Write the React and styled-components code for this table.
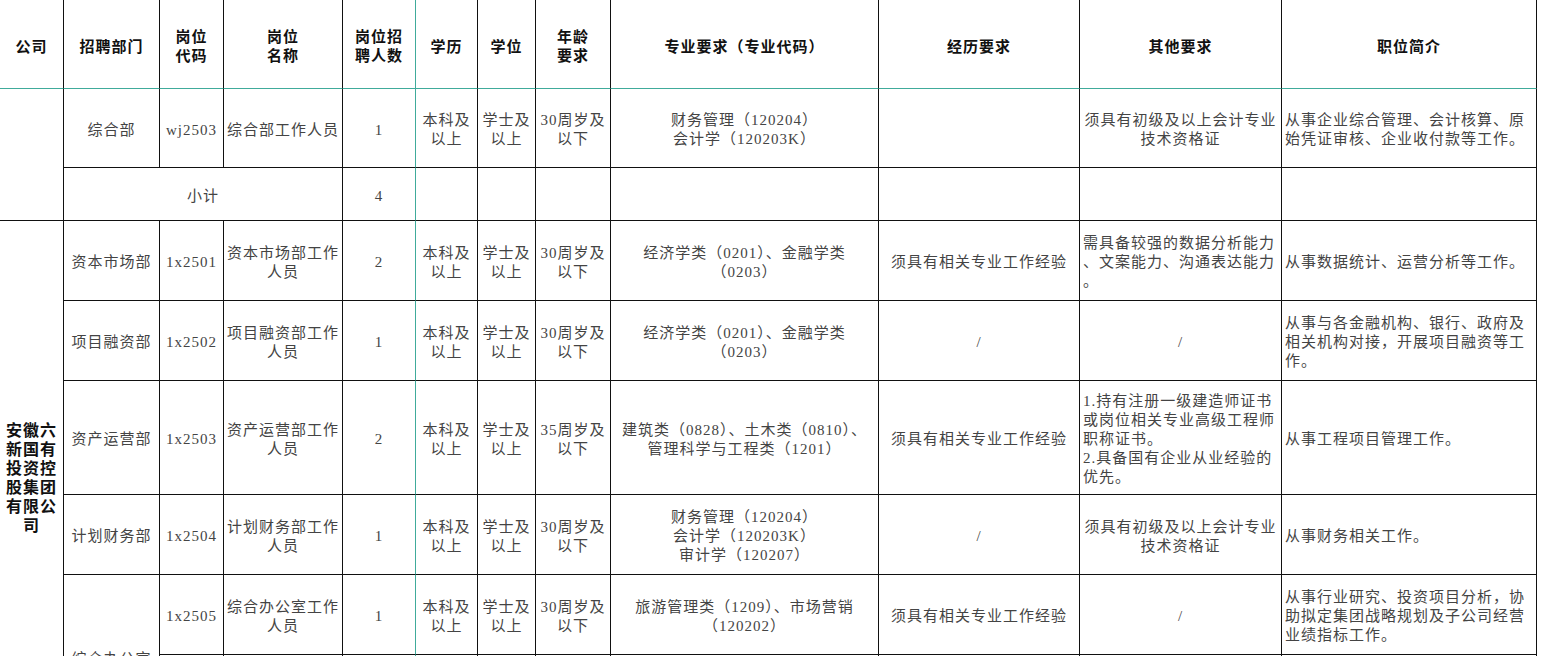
import React from 'react';
import styled, { createGlobalStyle } from 'styled-components';

const GlobalStyle = createGlobalStyle`
    html, body {
        margin: 0;
        padding: 0;
        overflow: hidden;
        background: #fff;
    }
`;

const GRID = '#111';
const FREEZE = '#40ab9b';

const columns = [64, 96, 64, 119, 73, 62, 58, 75, 268, 201, 202, 255];

const headers = [
    ['公司'],
    ['招聘部门'],
    ['岗位', '代码'],
    ['岗位', '名称'],
    ['岗位招', '聘人数'],
    ['学历'],
    ['学位'],
    ['年龄', '要求'],
    ['专业要求（专业代码）'],
    ['经历要求'],
    ['其他要求'],
    ['职位简介'],
];

const FREEZE_COL = 4;

function Lines({ text }) {
    const parts = Array.isArray(text) ? text : [text];
    return parts.map((line, i) => (
        <React.Fragment key={i}>
            {i > 0 && <br />}
            {line}
        </React.Fragment>
    ));
}

function App() {
    return (
        <>
            <GlobalStyle />
            <Sheet>
                <colgroup>
                    {columns.map((w, i) => (
                        <col key={i} style={{ width: w }} />
                    ))}
                </colgroup>
                <thead>
                    <Row $h={89}>
                        {headers.map((h, i) => (
                            <HeadCell key={i} $freeze={i === FREEZE_COL}>
                                <Lines text={h} />
                            </HeadCell>
                        ))}
                    </Row>
                </thead>
                <tbody>
                    <Row $h={79}>
                        <Cell rowSpan={2} />
                        <Cell>综合部</Cell>
                        <Cell>wj2503</Cell>
                        <Cell>综合部工作人员</Cell>
                        <Cell $freeze>1</Cell>
                        <Cell><Lines text={['本科及', '以上']} /></Cell>
                        <Cell><Lines text={['学士及', '以上']} /></Cell>
                        <Cell><Lines text={['30周岁及', '以下']} /></Cell>
                        <Cell><Lines text={['财务管理（120204）', '会计学（120203K）']} /></Cell>
                        <Cell />
                        <Cell><Lines text={['须具有初级及以上会计专业', '技术资格证']} /></Cell>
                        <Cell $align="left"><Lines text={['从事企业综合管理、会计核算、原', '始凭证审核、企业收付款等工作。']} /></Cell>
                    </Row>
                    <Row $h={53}>
                        <Cell colSpan={3}>小计</Cell>
                        <Cell $freeze>4</Cell>
                        <Cell />
                        <Cell />
                        <Cell />
                        <Cell />
                        <Cell />
                        <Cell />
                        <Cell />
                    </Row>
                    <Row $h={80}>
                        <Cell rowSpan={7} $bold>
                            <Lines text={['安徽六', '新国有', '投资控', '股集团', '有限公', '司']} />
                        </Cell>
                        <Cell>资本市场部</Cell>
                        <Cell>1x2501</Cell>
                        <Cell><Lines text={['资本市场部工作', '人员']} /></Cell>
                        <Cell $freeze>2</Cell>
                        <Cell><Lines text={['本科及', '以上']} /></Cell>
                        <Cell><Lines text={['学士及', '以上']} /></Cell>
                        <Cell><Lines text={['30周岁及', '以下']} /></Cell>
                        <Cell><Lines text={['经济学类（0201）、金融学类', '（0203）']} /></Cell>
                        <Cell>须具有相关专业工作经验</Cell>
                        <Cell $align="left"><Lines text={['需具备较强的数据分析能力', '、文案能力、沟通表达能力', '。']} /></Cell>
                        <Cell $align="left">从事数据统计、运营分析等工作。</Cell>
                    </Row>
                    <Row $h={80}>
                        <Cell>项目融资部</Cell>
                        <Cell>1x2502</Cell>
                        <Cell><Lines text={['项目融资部工作', '人员']} /></Cell>
                        <Cell $freeze>1</Cell>
                        <Cell><Lines text={['本科及', '以上']} /></Cell>
                        <Cell><Lines text={['学士及', '以上']} /></Cell>
                        <Cell><Lines text={['30周岁及', '以下']} /></Cell>
                        <Cell><Lines text={['经济学类（0201）、金融学类', '（0203）']} /></Cell>
                        <Cell>/</Cell>
                        <Cell>/</Cell>
                        <Cell $align="left"><Lines text={['从事与各金融机构、银行、政府及', '相关机构对接，开展项目融资等工', '作。']} /></Cell>
                    </Row>
                    <Row $h={114}>
                        <Cell>资产运营部</Cell>
                        <Cell>1x2503</Cell>
                        <Cell><Lines text={['资产运营部工作', '人员']} /></Cell>
                        <Cell $freeze>2</Cell>
                        <Cell><Lines text={['本科及', '以上']} /></Cell>
                        <Cell><Lines text={['学士及', '以上']} /></Cell>
                        <Cell><Lines text={['35周岁及', '以下']} /></Cell>
                        <Cell><Lines text={['建筑类（0828）、土木类（0810）、', '管理科学与工程类（1201）']} /></Cell>
                        <Cell>须具有相关专业工作经验</Cell>
                        <Cell $align="left"><Lines text={['1.持有注册一级建造师证书', '或岗位相关专业高级工程师', '职称证书。', '2.具备国有企业从业经验的', '优先。']} /></Cell>
                        <Cell $align="left">从事工程项目管理工作。</Cell>
                    </Row>
                    <Row $h={80}>
                        <Cell>计划财务部</Cell>
                        <Cell>1x2504</Cell>
                        <Cell><Lines text={['计划财务部工作', '人员']} /></Cell>
                        <Cell $freeze>1</Cell>
                        <Cell><Lines text={['本科及', '以上']} /></Cell>
                        <Cell><Lines text={['学士及', '以上']} /></Cell>
                        <Cell><Lines text={['30周岁及', '以下']} /></Cell>
                        <Cell><Lines text={['财务管理（120204）', '会计学（120203K）', '审计学（120207）']} /></Cell>
                        <Cell>/</Cell>
                        <Cell><Lines text={['须具有初级及以上会计专业', '技术资格证']} /></Cell>
                        <Cell $align="left">从事财务相关工作。</Cell>
                    </Row>
                    <Row $h={80}>
                        <Cell rowSpan={2}>综合办公室</Cell>
                        <Cell>1x2505</Cell>
                        <Cell><Lines text={['综合办公室工作', '人员']} /></Cell>
                        <Cell $freeze>1</Cell>
                        <Cell><Lines text={['本科及', '以上']} /></Cell>
                        <Cell><Lines text={['学士及', '以上']} /></Cell>
                        <Cell><Lines text={['30周岁及', '以下']} /></Cell>
                        <Cell><Lines text={['旅游管理类（1209）、市场营销', '（120202）']} /></Cell>
                        <Cell>须具有相关专业工作经验</Cell>
                        <Cell>/</Cell>
                        <Cell $align="left"><Lines text={['从事行业研究、投资项目分析，协', '助拟定集团战略规划及子公司经营', '业绩指标工作。']} /></Cell>
                    </Row>
                    <Row $h={86}>
                        <Cell>1x2506</Cell>
                        <Cell><Lines text={['综合办公室工作', '人员']} /></Cell>
                        <Cell $freeze>1</Cell>
                        <Cell><Lines text={['本科及', '以上']} /></Cell>
                        <Cell><Lines text={['学士及', '以上']} /></Cell>
                        <Cell><Lines text={['30周岁及', '以下']} /></Cell>
                        <Cell><Lines text={['中国语言文学类（0501）']} /></Cell>
                        <Cell>须具有相关专业工作经验</Cell>
                        <Cell>/</Cell>
                        <Cell $align="left">从事行政综合管理工作。</Cell>
                    </Row>
                </tbody>
            </Sheet>
        </>
    );
}

const Sheet = styled.table`
    table-layout: fixed;
    border-collapse: separate;
    border-spacing: 0;
    width: 1537px;
    font-family: "Liberation Serif", "Noto Sans CJK SC", serif;
    font-size: 15px;
    line-height: 19px;
    letter-spacing: 1px;
`;

const Row = styled.tr`
    height: ${(p) => p.$h}px;
`;

const HeadCell = styled.th`
    box-sizing: border-box;
    padding: 2px 3px 0;
    border-right: 1px solid ${(p) => (p.$freeze ? FREEZE : GRID)};
    border-bottom: 1px solid ${FREEZE};
    font-family: "Noto Sans CJK SC", sans-serif;
    font-weight: 700;
    color: #111;
    text-align: center;
    vertical-align: middle;
    white-space: nowrap;
`;

const Cell = styled.td`
    box-sizing: border-box;
    padding: ${(p) => (p.$bold ? '0 2px 8px' : '4px 3px 0')};
    border-right: 1px solid ${(p) => (p.$freeze ? FREEZE : GRID)};
    border-bottom: 1px solid ${GRID};
    color: ${(p) => (p.$bold ? '#111' : '#444')};
    font-weight: ${(p) => (p.$bold ? 700 : 400)};
    ${(p) => p.$bold && 'font-family: "Noto Sans CJK SC", sans-serif; font-size: 16px;'}
    text-align: ${(p) => p.$align || 'center'};
    vertical-align: middle;
    white-space: nowrap;
    overflow: hidden;
`;

export default App;
